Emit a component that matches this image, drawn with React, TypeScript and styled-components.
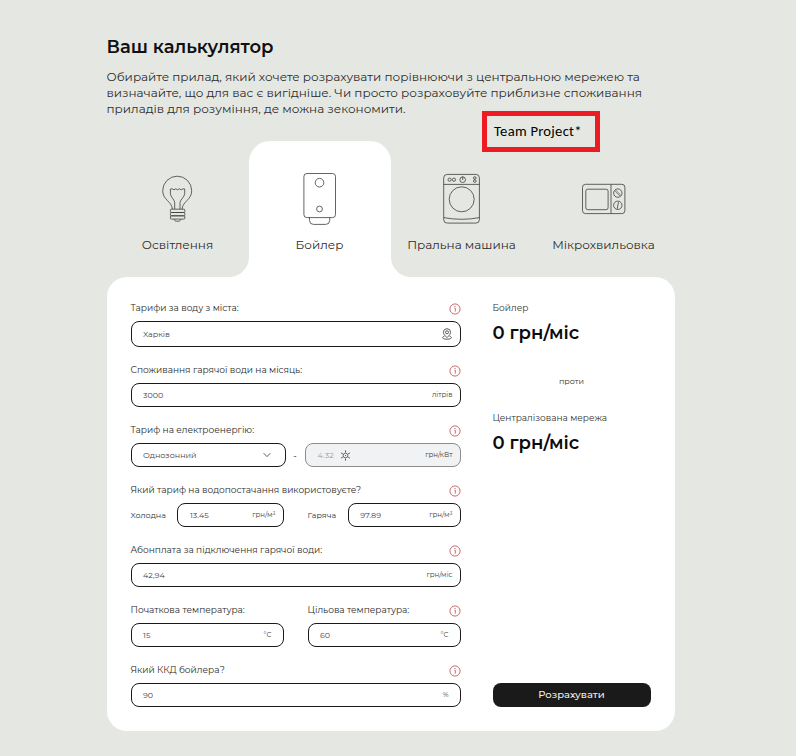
import React from "react";
import styled, { createGlobalStyle, css } from "styled-components";

const GlobalStyle = createGlobalStyle`
  *, *::before, *::after { box-sizing: border-box; }
  body {
    margin: 0;
    background: #e5e8e2;
    color: #1a1a1a;
    font-family: Montserrat, Inter, sans-serif;
  }
`;

const Page = styled.main`
  position: relative;
  width: 796px;
  height: 756px;
  padding: 36px 121.5px 25px 106.5px;
  overflow: hidden;
`;

const Title = styled.h1`
  margin: 0;
  font-size: 18px;
  line-height: 22px;
  font-weight: 600;
  color: #101010;
`;

const Intro = styled.p`
  margin: 11px 0 0;
  font-size: 12px;
  line-height: 16px;
  white-space: nowrap;
  color: #2b2b2b;
`;

const Note = styled.aside`
  position: absolute;
  left: 482px;
  top: 111px;
  width: 118px;
  height: 41px;
  border: 5px solid #ed1c24;
  padding-left: 7px;
  font: 14.67px/31px Carlito, "Open Sans", sans-serif;
  letter-spacing: 0.25px;
  color: #000;
  white-space: nowrap;
`;

const Tabs = styled.nav`
  display: grid;
  grid-template-columns: repeat(4, 1fr);
  height: 136px;
  margin-top: 24px;
`;

const Tab = styled.a<{ $active?: boolean }>`
  position: relative;
  display: flex;
  flex-direction: column;
  align-items: center;
  gap: 12px;
  padding-top: 32px;
  font-size: 12px;
  line-height: 15px;
  color: #2b2b2b;
  ${(p) =>
    p.$active &&
    css`
      background: #fff;
      border-radius: 21px 21px 0 0;
      &::before,
      &::after {
        content: "";
        position: absolute;
        bottom: 0;
        width: 20px;
        height: 20px;
      }
      &::before {
        right: 100%;
        background: radial-gradient(circle at 0 0, transparent 19.5px, #fff 20.5px);
      }
      &::after {
        left: 100%;
        background: radial-gradient(circle at 100% 0, transparent 19.5px, #fff 20.5px);
      }
    `}
`;

const TabIcon = styled.svg`
  width: 52px;
  height: 52px;
  fill: none;
  stroke: #3c3e3b;
  stroke-width: 0.8;
  stroke-linejoin: round;
`;

const Panel = styled.section`
  display: grid;
  grid-template-columns: 330px 158px;
  column-gap: 32px;
  height: 454px;
  padding: 24px;
  border-radius: 20px;
  background: #fff;
`;

const Form = styled.form`
  display: flex;
  flex-direction: column;
  gap: 16px;
`;

const Field = styled.div`
  display: flex;
  flex-direction: column;
  gap: 6px;
  min-width: 0;
`;

const Pair = styled.div`
  display: grid;
  grid-template-columns: 1fr 1fr;
  column-gap: 24px;
`;

const LabelRow = styled.div`
  display: flex;
  justify-content: space-between;
  align-items: flex-end;
  height: 14px;
`;

const Label = styled.label`
  font-size: 9px;
  line-height: 14px;
  color: #2b2b2b;
  white-space: nowrap;
`;

const InfoSvg = styled.svg`
  width: 12px;
  height: 12px;
  fill: none;
  stroke: #bb4a4a;
`;

const Box = styled.div<{ $tall?: boolean; $muted?: boolean; $inset?: number }>`
  display: flex;
  align-items: center;
  flex: 1;
  min-height: ${(p) => (p.$tall ? 26 : 24)}px;
  padding: 0 ${(p) => (p.$inset ?? 8) - 1}px 0 ${(p) => (p.$muted ? 12 : 11.5)}px;
  border: 1px solid ${(p) => (p.$muted ? "#8c8c8c" : "#1a1a1a")};
  border-radius: 8px;
  background: ${(p) => (p.$muted ? "#f1f2f3" : "#fff")};
`;

const Value = styled.span<{ $muted?: boolean }>`
  font-size: 8px;
  line-height: 12px;
  color: ${(p) => (p.$muted ? "#9b9b9b" : "#444")};
`;

const Unit = styled.span`
  margin-left: auto;
  font-size: 7px;
  line-height: 10px;
  color: #444;
`;

const InputLine = styled.div`
  display: flex;
  align-items: center;
  height: 24px;
`;

const SelectBox = styled(Box)`
  flex: 0 0 155px;
`;

const Dash = styled.span`
  width: 19px;
  text-align: center;
  font-size: 9px;
`;

const SideLabel = styled.span`
  margin-right: 11.5px;
  font-size: 8px;
  color: #333;
`;

const Glyph = styled.svg<{ $end?: boolean; $size: number }>`
  width: ${(p) => p.$size}px;
  height: ${(p) => p.$size}px;
  margin-left: ${(p) => (p.$end ? "auto" : "6px")};
  fill: none;
  stroke: #333;
  stroke-width: 0.8;
`;

const Results = styled.div`
  display: flex;
  flex-direction: column;
`;

const ResultName = styled.div`
  font-size: 9px;
  line-height: 14px;
  color: #333;
  white-space: nowrap;
`;

const ResultValue = styled.div`
  margin-top: 6px;
  font-size: 18px;
  line-height: 24px;
  font-weight: 600;
  color: #0c0c0c;
`;

const Versus = styled.div`
  margin: 30px 0 26px;
  text-align: center;
  font-size: 8px;
  line-height: 12px;
  height: 10px;
  color: #333;
`;

const Submit = styled.button`
  height: 24px;
  margin-top: auto;
  padding: 0;
  border: 0;
  border-radius: 8px;
  background: #1a1a1a;
  color: #eee;
  font: 500 10px/24px Montserrat, Inter, sans-serif;
`;

const Info = () => (
  <InfoSvg viewBox="0 0 12 12">
    <circle cx="6" cy="6" r="5.1" strokeWidth="0.8" />
    <path d="M5.5 5.1H6.3V8.6" strokeWidth="0.8" />
    <circle cx="6" cy="3.5" r="0.5" fill="#b03030" stroke="none" />
  </InfoSvg>
);

const Head = ({ text, info = true }: { text: string; info?: boolean }) => (
  <LabelRow>
    <Label>{text}</Label>
    {info && <Info />}
  </LabelRow>
);

export default function App() {
  return (
    <>
      <GlobalStyle />
      <Page>
        <Title>Ваш калькулятор</Title>
        <Intro>
          Обирайте прилад, який хочете розрахувати порівнюючи з центральною мережею та
          <br />
          визначайте, що для вас є вигідніше. Чи просто розраховуйте приблизне споживання
          <br />
          приладів для розуміння, де можна зекономити.
        </Intro>
        <Note>Team Project*</Note>
        <Tabs>
          <Tab>
            <TabIcon viewBox="0 0 52 52">
              <path d="M20.3 36C20 28.5 10.7 27 10.7 17.7a14.5 14.5 0 0 1 29 0C39.7 27 30.4 28.5 30.1 36" />
              <path d="M22.7 36V29.5C22.5 26.5 18.4 24 18.4 20.5V16l1.8-.2 1.8 1 1.8-1 1.8 1 1.8-1 1.8 1 1.8-1 1.7.2v4.5C32.7 24 28.2 26.5 28 29.5V36" />
              <rect x="18.4" y="36.2" width="14.4" height="3.3" rx="1" />
              <rect x="18.4" y="39.5" width="14.4" height="3.3" rx="1" />
              <rect x="18.4" y="42.8" width="14.4" height="3.3" rx="1" />
              <path d="M22.3 46.2c.2 1.2.8 2 1.9 2h2.6c1.1 0 1.7-.8 1.9-2" />
            </TabIcon>
            Освітлення
          </Tab>
          <Tab $active>
            <TabIcon viewBox="0 0 52 52">
              <rect x="9.9" y="0.5" width="31.6" height="44.1" rx="3" />
              <circle cx="25.5" cy="9.7" r="4.3" />
              <circle cx="25.5" cy="36" r="2.9" />
              <path d="M15.5 44.6V47.5a4 4 0 0 0 4 3.9H31.7a4 4 0 0 0 4-3.9V44.6" />
            </TabIcon>
            Бойлер
          </Tab>
          <Tab>
            <TabIcon viewBox="0 0 52 52">
              <rect x="7.7" y="1.4" width="35.7" height="48.7" rx="3.5" />
              <path d="M7.7 11.4H43.4M7.7 44.6Q25.5 48 43.4 44.6" />
              <circle cx="13.6" cy="6.7" r="1.6" />
              <circle cx="18" cy="6.7" r="1.6" />
              <circle cx="26.7" cy="6.7" r="2.8" />
              <path d="M26.7 3.5V7" />
              <circle cx="38.8" cy="5" r="1.3" />
              <circle cx="38.8" cy="8.1" r="1.3" />
              <circle cx="25.7" cy="26.3" r="12.5" />
            </TabIcon>
            Пральна машина
          </Tab>
          <Tab>
            <TabIcon viewBox="0 0 52 52">
              <rect x="4.5" y="11.3" width="42.4" height="29.3" rx="3" />
              <path d="M33 11.3V40.6" />
              <rect x="7.8" y="16.2" width="22.3" height="20.5" rx="2" />
              <circle cx="39.8" cy="20.1" r="4.2" />
              <path d="M36.8 17.9 42 23.1M37.7 17.1 42.8 22.2" strokeWidth="0.6" />
              <circle cx="39.8" cy="32.3" r="4.2" />
              <path d="M39.2 35.8 40.5 29.2" />
            </TabIcon>
            Мікрохвильовка
          </Tab>
        </Tabs>
        <Panel>
          <Form>
            <Field>
              <Head text="Тарифи за воду з міста:" />
              <Box $tall>
                <Value>Харків</Value>
                <Glyph $end $size={12} viewBox="0 0 12 12">
                  <path d="M6 9.6C4 7.6 2.4 6.1 2.4 4.3a3.6 3.6 0 0 1 7.2 0C9.6 6.1 8 7.6 6 9.6Z" />
                  <circle cx="6" cy="4.3" r="1.5" />
                  <path d="M3.4 8.3C.4 9 1 11.2 6 11.2s5.6-2.2 2.6-2.9" />
                </Glyph>
              </Box>
            </Field>
            <Field>
              <Head text="Споживання гарячої води на місяць:" />
              <Box>
                <Value>3000</Value>
                <Unit>літрів</Unit>
              </Box>
            </Field>
            <Field>
              <Head text="Тариф на електроенергію:" />
              <InputLine>
                <SelectBox $inset={14}>
                  <Value>Однозонний</Value>
                  <Glyph $end $size={10} viewBox="0 0 10 10">
                    <path d="M1.6 3.2 5 6.6 8.4 3.2" />
                  </Glyph>
                </SelectBox>
                <Dash>-</Dash>
                <Box $muted>
                  <Value $muted>4.32</Value>
                  <Glyph $size={11} viewBox="0 0 11 11">
                    <circle cx="5.5" cy="5.5" r="2.3" strokeWidth="0.7" />
                    <path
                      d="M5.5 .5V2.4M5.5 8.6V10.5M1.2 3 2.8 3.9M9.8 3 8.2 3.9M1.2 8 2.8 7.1M9.8 8 8.2 7.1"
                      strokeWidth="0.9"
                    />
                    <circle cx="5.5" cy="5.5" r="0.5" fill="#333" stroke="none" />
                  </Glyph>
                  <Unit>грн/кВт</Unit>
                </Box>
              </InputLine>
            </Field>
            <Field>
              <Head text="Який тариф на водопостачання використовуєте?" />
              <Pair>
                <InputLine>
                  <SideLabel>Холодна</SideLabel>
                  <Box>
                    <Value>13.45</Value>
                    <Unit>грн/м³</Unit>
                  </Box>
                </InputLine>
                <InputLine>
                  <SideLabel>Гаряча</SideLabel>
                  <Box>
                    <Value>97.89</Value>
                    <Unit>грн/м³</Unit>
                  </Box>
                </InputLine>
              </Pair>
            </Field>
            <Field>
              <Head text="Абонплата за підключення гарячої води:" />
              <Box>
                <Value>42,94</Value>
                <Unit>грн/міс</Unit>
              </Box>
            </Field>
            <Pair>
              <Field>
                <Head text="Початкова температура:" info={false} />
                <Box $inset={12}>
                  <Value>15</Value>
                  <Unit>°C</Unit>
                </Box>
              </Field>
              <Field>
                <Head text="Цільова температура:" />
                <Box $inset={12}>
                  <Value>60</Value>
                  <Unit>°C</Unit>
                </Box>
              </Field>
            </Pair>
            <Field>
              <Head text="Який ККД бойлера?" />
              <Box $inset={12}>
                <Value>90</Value>
                <Unit>%</Unit>
              </Box>
            </Field>
          </Form>
          <Results>
            <ResultName>Бойлер</ResultName>
            <ResultValue>0 грн/міс</ResultValue>
            <Versus>проти</Versus>
            <ResultName>Централізована мережа</ResultName>
            <ResultValue>0 грн/міс</ResultValue>
            <Submit type="button">Розрахувати</Submit>
          </Results>
        </Panel>
      </Page>
    </>
  );
}
